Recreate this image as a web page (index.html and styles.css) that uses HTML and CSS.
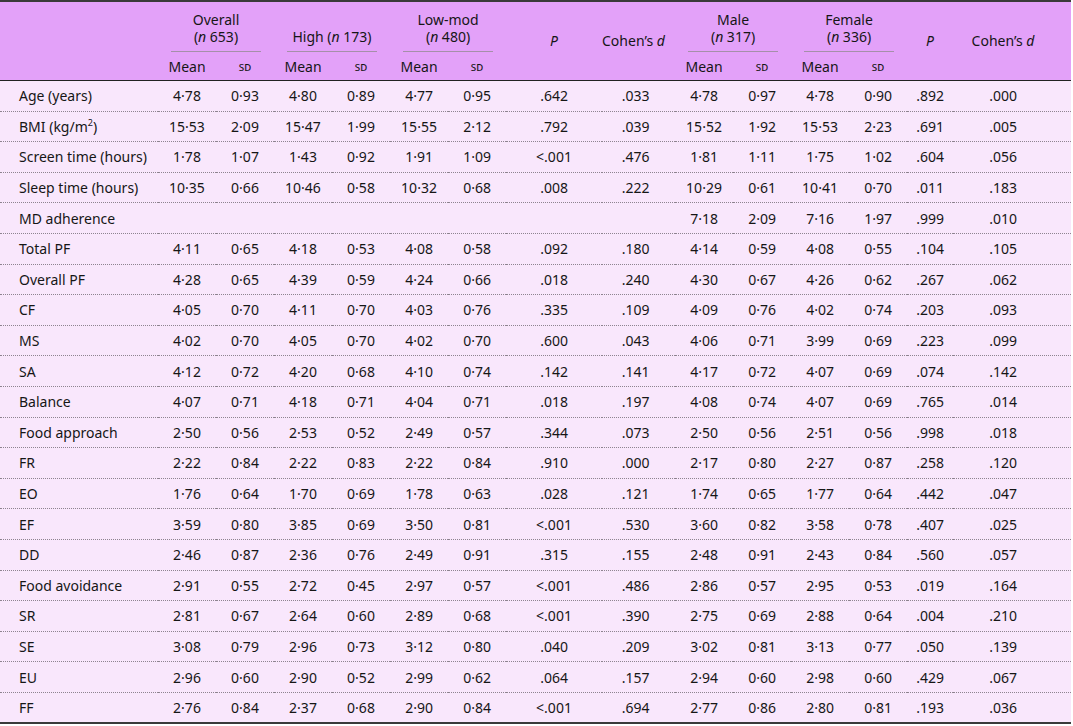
FILE: index.html
```html
<!DOCTYPE html>
<html lang="en">
<head>
<meta charset="utf-8">
<title>Table</title>
<link rel="stylesheet" href="styles.css">
</head>
<body>
<table class="data">
  <colgroup>
    <col class="c-label">
    <col class="c-m"><col class="c-s">
    <col class="c-m"><col class="c-s">
    <col class="c-m"><col class="c-s">
    <col class="c-p"><col class="c-d">
    <col class="c-m"><col class="c-s">
    <col class="c-m"><col class="c-s">
    <col class="c-p2"><col class="c-d2">
  </colgroup>
  <thead>
    <tr class="h1">
      <th rowspan="2" class="solo"></th>
      <th colspan="2" class="grp"><div class="grp-in">Overall<br>(<i>n</i> 653)</div></th>
      <th colspan="2" class="grp"><div class="grp-in">High (<i>n</i> 173)</div></th>
      <th colspan="2" class="grp"><div class="grp-in">Low-mod<br>(<i>n</i> 480)</div></th>
      <th rowspan="2" class="solo"><i>P</i></th>
      <th rowspan="2" class="solo d1">Cohen’s <i>d</i></th>
      <th colspan="2" class="grp"><div class="grp-in">Male<br>(<i>n</i> 317)</div></th>
      <th colspan="2" class="grp"><div class="grp-in">Female<br>(<i>n</i> 336)</div></th>
      <th rowspan="2" class="solo"><i>P</i></th>
      <th rowspan="2" class="solo d2">Cohen’s <i>d</i></th>
    </tr>
    <tr class="h2">
      <th>Mean</th><th class="sc">sd</th>
      <th>Mean</th><th class="sc">sd</th>
      <th>Mean</th><th class="sc">sd</th>
      <th>Mean</th><th class="sc">sd</th>
      <th>Mean</th><th class="sc">sd</th>
    </tr>
  </thead>
  <tbody>
    <tr><td>Age (years)</td><td>4·78</td><td>0·93</td><td>4·80</td><td>0·89</td><td>4·77</td><td>0·95</td><td>.642</td><td>.033</td><td>4·78</td><td>0·97</td><td>4·78</td><td>0·90</td><td>.892</td><td>.000</td></tr>
    <tr><td>BMI (kg/m<sup>2</sup>)</td><td>15·53</td><td>2·09</td><td>15·47</td><td>1·99</td><td>15·55</td><td>2·12</td><td>.792</td><td>.039</td><td>15·52</td><td>1·92</td><td>15·53</td><td>2·23</td><td>.691</td><td>.005</td></tr>
    <tr><td>Screen time (hours)</td><td>1·78</td><td>1·07</td><td>1·43</td><td>0·92</td><td>1·91</td><td>1·09</td><td>&lt;.001</td><td>.476</td><td>1·81</td><td>1·11</td><td>1·75</td><td>1·02</td><td>.604</td><td>.056</td></tr>
    <tr><td>Sleep time (hours)</td><td>10·35</td><td>0·66</td><td>10·46</td><td>0·58</td><td>10·32</td><td>0·68</td><td>.008</td><td>.222</td><td>10·29</td><td>0·61</td><td>10·41</td><td>0·70</td><td>.011</td><td>.183</td></tr>
    <tr><td>MD adherence</td><td></td><td></td><td></td><td></td><td></td><td></td><td></td><td></td><td>7·18</td><td>2·09</td><td>7·16</td><td>1·97</td><td>.999</td><td>.010</td></tr>
    <tr><td>Total PF</td><td>4·11</td><td>0·65</td><td>4·18</td><td>0·53</td><td>4·08</td><td>0·58</td><td>.092</td><td>.180</td><td>4·14</td><td>0·59</td><td>4·08</td><td>0·55</td><td>.104</td><td>.105</td></tr>
    <tr><td>Overall PF</td><td>4·28</td><td>0·65</td><td>4·39</td><td>0·59</td><td>4·24</td><td>0·66</td><td>.018</td><td>.240</td><td>4·30</td><td>0·67</td><td>4·26</td><td>0·62</td><td>.267</td><td>.062</td></tr>
    <tr><td>CF</td><td>4·05</td><td>0·70</td><td>4·11</td><td>0·70</td><td>4·03</td><td>0·76</td><td>.335</td><td>.109</td><td>4·09</td><td>0·76</td><td>4·02</td><td>0·74</td><td>.203</td><td>.093</td></tr>
    <tr><td>MS</td><td>4·02</td><td>0·70</td><td>4·05</td><td>0·70</td><td>4·02</td><td>0·70</td><td>.600</td><td>.043</td><td>4·06</td><td>0·71</td><td>3·99</td><td>0·69</td><td>.223</td><td>.099</td></tr>
    <tr><td>SA</td><td>4·12</td><td>0·72</td><td>4·20</td><td>0·68</td><td>4·10</td><td>0·74</td><td>.142</td><td>.141</td><td>4·17</td><td>0·72</td><td>4·07</td><td>0·69</td><td>.074</td><td>.142</td></tr>
    <tr><td>Balance</td><td>4·07</td><td>0·71</td><td>4·18</td><td>0·71</td><td>4·04</td><td>0·71</td><td>.018</td><td>.197</td><td>4·08</td><td>0·74</td><td>4·07</td><td>0·69</td><td>.765</td><td>.014</td></tr>
    <tr><td>Food approach</td><td>2·50</td><td>0·56</td><td>2·53</td><td>0·52</td><td>2·49</td><td>0·57</td><td>.344</td><td>.073</td><td>2·50</td><td>0·56</td><td>2·51</td><td>0·56</td><td>.998</td><td>.018</td></tr>
    <tr><td>FR</td><td>2·22</td><td>0·84</td><td>2·22</td><td>0·83</td><td>2·22</td><td>0·84</td><td>.910</td><td>.000</td><td>2·17</td><td>0·80</td><td>2·27</td><td>0·87</td><td>.258</td><td>.120</td></tr>
    <tr><td>EO</td><td>1·76</td><td>0·64</td><td>1·70</td><td>0·69</td><td>1·78</td><td>0·63</td><td>.028</td><td>.121</td><td>1·74</td><td>0·65</td><td>1·77</td><td>0·64</td><td>.442</td><td>.047</td></tr>
    <tr><td>EF</td><td>3·59</td><td>0·80</td><td>3·85</td><td>0·69</td><td>3·50</td><td>0·81</td><td>&lt;.001</td><td>.530</td><td>3·60</td><td>0·82</td><td>3·58</td><td>0·78</td><td>.407</td><td>.025</td></tr>
    <tr><td>DD</td><td>2·46</td><td>0·87</td><td>2·36</td><td>0·76</td><td>2·49</td><td>0·91</td><td>.315</td><td>.155</td><td>2·48</td><td>0·91</td><td>2·43</td><td>0·84</td><td>.560</td><td>.057</td></tr>
    <tr><td>Food avoidance</td><td>2·91</td><td>0·55</td><td>2·72</td><td>0·45</td><td>2·97</td><td>0·57</td><td>&lt;.001</td><td>.486</td><td>2·86</td><td>0·57</td><td>2·95</td><td>0·53</td><td>.019</td><td>.164</td></tr>
    <tr><td>SR</td><td>2·81</td><td>0·67</td><td>2·64</td><td>0·60</td><td>2·89</td><td>0·68</td><td>&lt;.001</td><td>.390</td><td>2·75</td><td>0·69</td><td>2·88</td><td>0·64</td><td>.004</td><td>.210</td></tr>
    <tr><td>SE</td><td>3·08</td><td>0·79</td><td>2·96</td><td>0·73</td><td>3·12</td><td>0·80</td><td>.040</td><td>.209</td><td>3·02</td><td>0·81</td><td>3·13</td><td>0·77</td><td>.050</td><td>.139</td></tr>
    <tr><td>EU</td><td>2·96</td><td>0·60</td><td>2·90</td><td>0·52</td><td>2·99</td><td>0·62</td><td>.064</td><td>.157</td><td>2·94</td><td>0·60</td><td>2·98</td><td>0·60</td><td>.429</td><td>.067</td></tr>
    <tr><td>FF</td><td>2·76</td><td>0·84</td><td>2·37</td><td>0·68</td><td>2·90</td><td>0·84</td><td>&lt;.001</td><td>.694</td><td>2·77</td><td>0·86</td><td>2·80</td><td>0·81</td><td>.193</td><td>.036</td></tr>
  </tbody>
</table>
</body>
</html>
```

FILE: styles.css
```css
html, body {
  margin: 0;
  padding: 0;
  background: #ffffff;
}

body {
  font-family: "Noto Sans", "Open Sans", sans-serif;
  font-size: 14px;
  color: #161616;
}

.data {
  width: 1071px;
  border-collapse: collapse;
  table-layout: fixed;
  border-top: 2px solid #3a3a3a;
  border-bottom: 2px solid #3a3a3a;
}

.c-label { width: 158px; }
.c-m { width: 58px; }
.c-s { width: 58px; }
.c-p { width: 96px; }
.c-d { width: 73px; }
.c-p2 { width: 46px; }
.c-d2 { width: 118px; }

thead th {
  background: #e3a1f9;
  font-weight: normal;
  padding: 0;
  text-align: center;
  line-height: 17px;
  white-space: nowrap;
}

.h1 th {
  height: 50px;
  vertical-align: bottom;
}

.h1 th.solo {
  vertical-align: middle;
  padding-bottom: 2px;
  border-bottom: 1.5px solid #222222;
}

.h1 th.d1 {
  padding-right: 16px;
}

.h1 th.d2 {
  padding-right: 18px;
}

.grp-in {
  margin: 0 13px;
  padding-bottom: 6px;
  border-bottom: 1px solid #a58fa9;
}

.h2 th {
  height: 27px;
  border-bottom: 1.5px solid #222222;
  vertical-align: middle;
  padding-top: 1px;
}

.sc {
  font-variant: small-caps;
  text-transform: lowercase;
  font-size: 12px;
}

tbody td {
  background: #f9e7fc;
  height: 29.6px;
  padding: 0;
  text-align: center;
  border-bottom: 1px dotted #8e8490;
  white-space: nowrap;
}

tbody tr:last-child td {
  border-bottom: none;
}

tbody td:first-child {
  text-align: left;
  padding-left: 19px;
}

tbody td:nth-child(9) {
  padding-right: 6px;
}

tbody td:nth-child(15) {
  padding-right: 18px;
}

sup {
  font-size: 9px;
  line-height: 0;
}
```
